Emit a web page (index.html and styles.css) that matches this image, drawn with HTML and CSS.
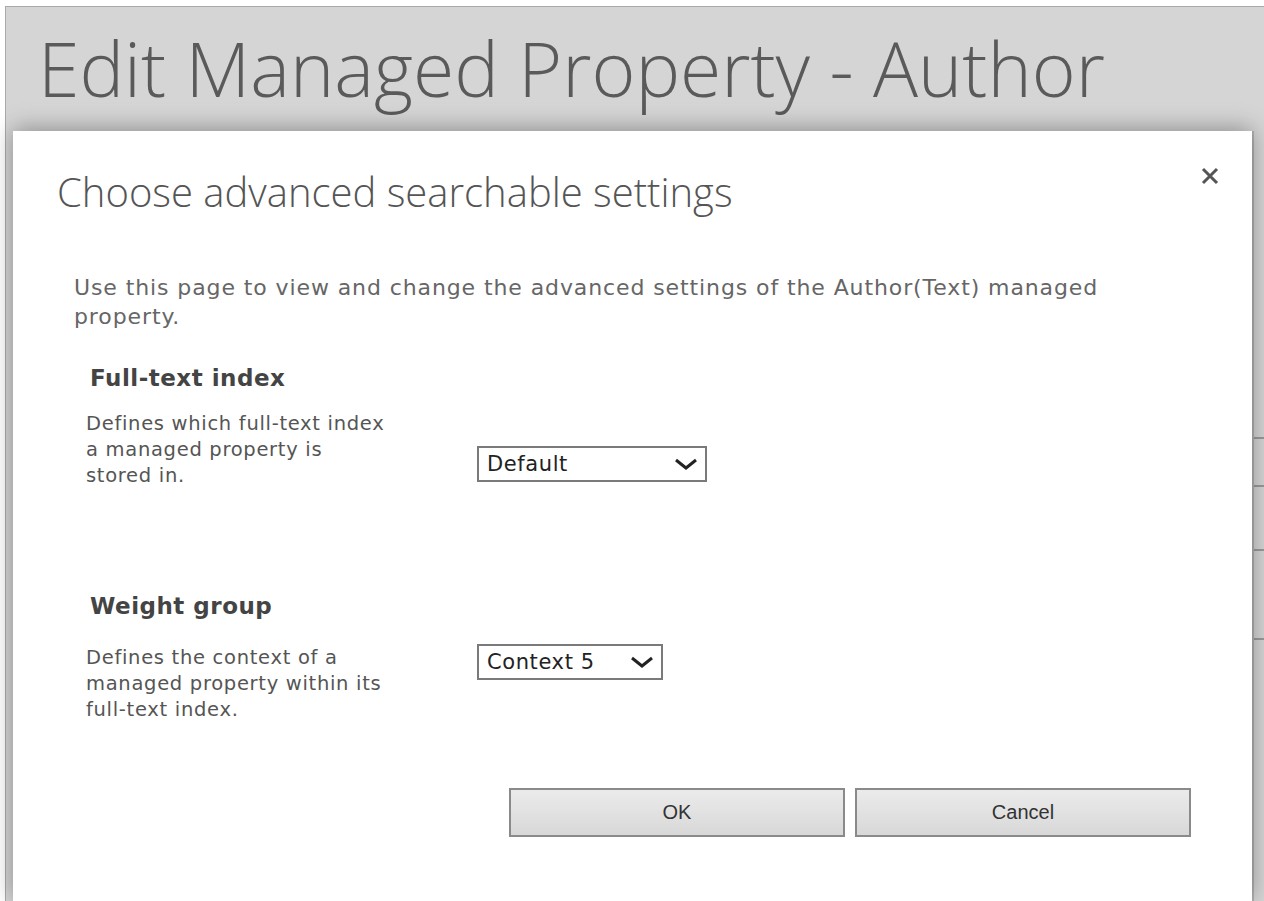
FILE: index.html
```html
<!DOCTYPE html>
<html lang="en">
<head>
<meta charset="utf-8">
<title>Edit Managed Property - Author</title>
<link rel="stylesheet" href="styles.css">
</head>
<body>
<div class="page">
  <h1 class="page-title">Edit Managed Property - Author</h1>
  <div class="stage">
    <div class="dialog">
      <div class="dialog-head">
        <h2 class="dialog-title">Choose advanced searchable settings</h2>
        <button class="close" aria-label="Close">
          <svg width="22" height="22" viewBox="0 0 22 22"><path d="M4 4 L18 18 M18 4 L4 18" stroke="#555" stroke-width="3" fill="none"/></svg>
        </button>
      </div>
      <p class="intro">Use this page to view and change the advanced settings of the Author(Text) managed property.</p>

      <section class="setting">
        <h3 class="setting-name">Full-text index</h3>
        <div class="setting-row setting-row-first">
          <p class="setting-desc">Defines which full-text index<br>a managed property is<br>stored in.</p>
          <div class="select select-wide">
            <span>Default</span>
            <svg width="24" height="12" viewBox="0 0 24 12"><path d="M2 2 L12 10 L22 2" stroke="#222" stroke-width="3" fill="none"/></svg>
          </div>
        </div>
      </section>

      <section class="setting">
        <h3 class="setting-name">Weight group</h3>
        <div class="setting-row setting-row-second">
          <p class="setting-desc">Defines the context of a<br>managed property within its<br>full-text index.</p>
          <div class="select select-narrow">
            <span>Context 5</span>
            <svg width="24" height="12" viewBox="0 0 24 12"><path d="M2 2 L12 10 L22 2" stroke="#222" stroke-width="3" fill="none"/></svg>
          </div>
        </div>
      </section>

      <div class="actions">
        <button class="btn">OK</button>
        <button class="btn">Cancel</button>
      </div>
    </div>
    <div class="backdrop-edge">
      <div class="edge-line edge-line-1"></div>
      <div class="edge-line edge-line-2"></div>
      <div class="edge-line edge-line-3"></div>
      <div class="edge-line edge-line-4"></div>
    </div>
  </div>
</div>
</body>
</html>
```

FILE: styles.css
```css
* { box-sizing: border-box; }

html, body {
  margin: 0;
  padding: 0;
  background: #ffffff;
  overflow: hidden;
}

.page {
  margin: 6px 0 0 5px;
  height: 895px;
  background: #d5d5d5;
  border-top: 1px solid #a9a9a9;
  border-left: 1px solid #a9a9a9;
  display: flex;
  flex-direction: column;
}

.page-title {
  margin: 0;
  padding: 11px 0 0 32px;
  height: 124px;
  font-family: "Open Sans", sans-serif;
  font-weight: 300;
  font-size: 75px;
  line-height: 100px;
  color: #5a5a5a;
  white-space: nowrap;
}

.stage {
  flex: 1;
  display: flex;
  padding-left: 7px;
  min-height: 0;
}

.dialog {
  width: 1239px;
  flex: none;
  background: #ffffff;
  box-shadow: 0 -2px 22px rgba(0, 0, 0, 0.35);
  padding: 0 35px 0 44px;
  position: relative;
  z-index: 1;
}

.dialog-head {
  display: flex;
  justify-content: space-between;
  align-items: flex-start;
  padding-top: 33px;
}

.dialog-title {
  margin: 0;
  font-family: "Open Sans", sans-serif;
  font-weight: 300;
  font-size: 40px;
  line-height: 56px;
  color: #555555;
}

.close {
  border: 0;
  background: none;
  padding: 0;
  margin: 1px -4px 0 0;
  width: 22px;
  height: 22px;
}

.close svg { display: block; }

.intro {
  margin: 53px 0 0 17px;
  max-width: 1090px;
  font-family: "DejaVu Sans", Verdana, sans-serif;
  font-size: 22px;
  letter-spacing: 0.9px;
  line-height: 29px;
  color: #666666;
}

.setting-name {
  margin: 33px 0 0 33px;
  font-family: "DejaVu Sans", Verdana, sans-serif;
  font-weight: bold;
  font-size: 23px;
  letter-spacing: 0.5px;
  line-height: 28px;
  color: #444444;
}

.setting + .setting .setting-name { margin-top: 103px; }

.setting-row {
  display: flex;
  align-items: flex-start;
}

.setting-row-first { margin-top: 19px; }
.setting-row-second { margin-top: 25px; }

.setting-desc {
  margin: 0 91px 0 29px;
  width: 300px;
  white-space: nowrap;
  font-family: "DejaVu Sans", Verdana, sans-serif;
  font-size: 19.5px;
  letter-spacing: 0.7px;
  line-height: 26px;
  color: #555555;
}

.select {
  height: 36px;
  border: 2px solid #7a7a7a;
  background: #ffffff;
  display: flex;
  align-items: center;
  justify-content: space-between;
  padding: 0 7px 0 8px;
  font-family: "DejaVu Sans", Verdana, sans-serif;
  font-size: 21px;
  letter-spacing: 0.6px;
  color: #222222;
}

.select svg { display: block; }

.select-wide { width: 230px; margin-top: 35px; }
.select-narrow { width: 186px; margin-top: -1px; }

.actions {
  display: flex;
  gap: 10px;
  margin: 65px 0 0 452px;
}

.btn {
  width: 336px;
  height: 49px;
  border: 2px solid #8a8a8a;
  background: linear-gradient(#ebebeb, #d8d8d8);
  font-family: "Liberation Sans", Arial, sans-serif;
  font-size: 20px;
  color: #333333;
  padding: 0;
}

.backdrop-edge {
  flex: 1;
  border-left: 2px solid #b3b3b3;
}

.edge-line {
  height: 2px;
  background: #9a9a9a;
}

.edge-line-1 { margin-top: 306px; }
.edge-line-2 { margin-top: 46px; }
.edge-line-3 { margin-top: 62px; }
.edge-line-4 { margin-top: 87px; }
```
